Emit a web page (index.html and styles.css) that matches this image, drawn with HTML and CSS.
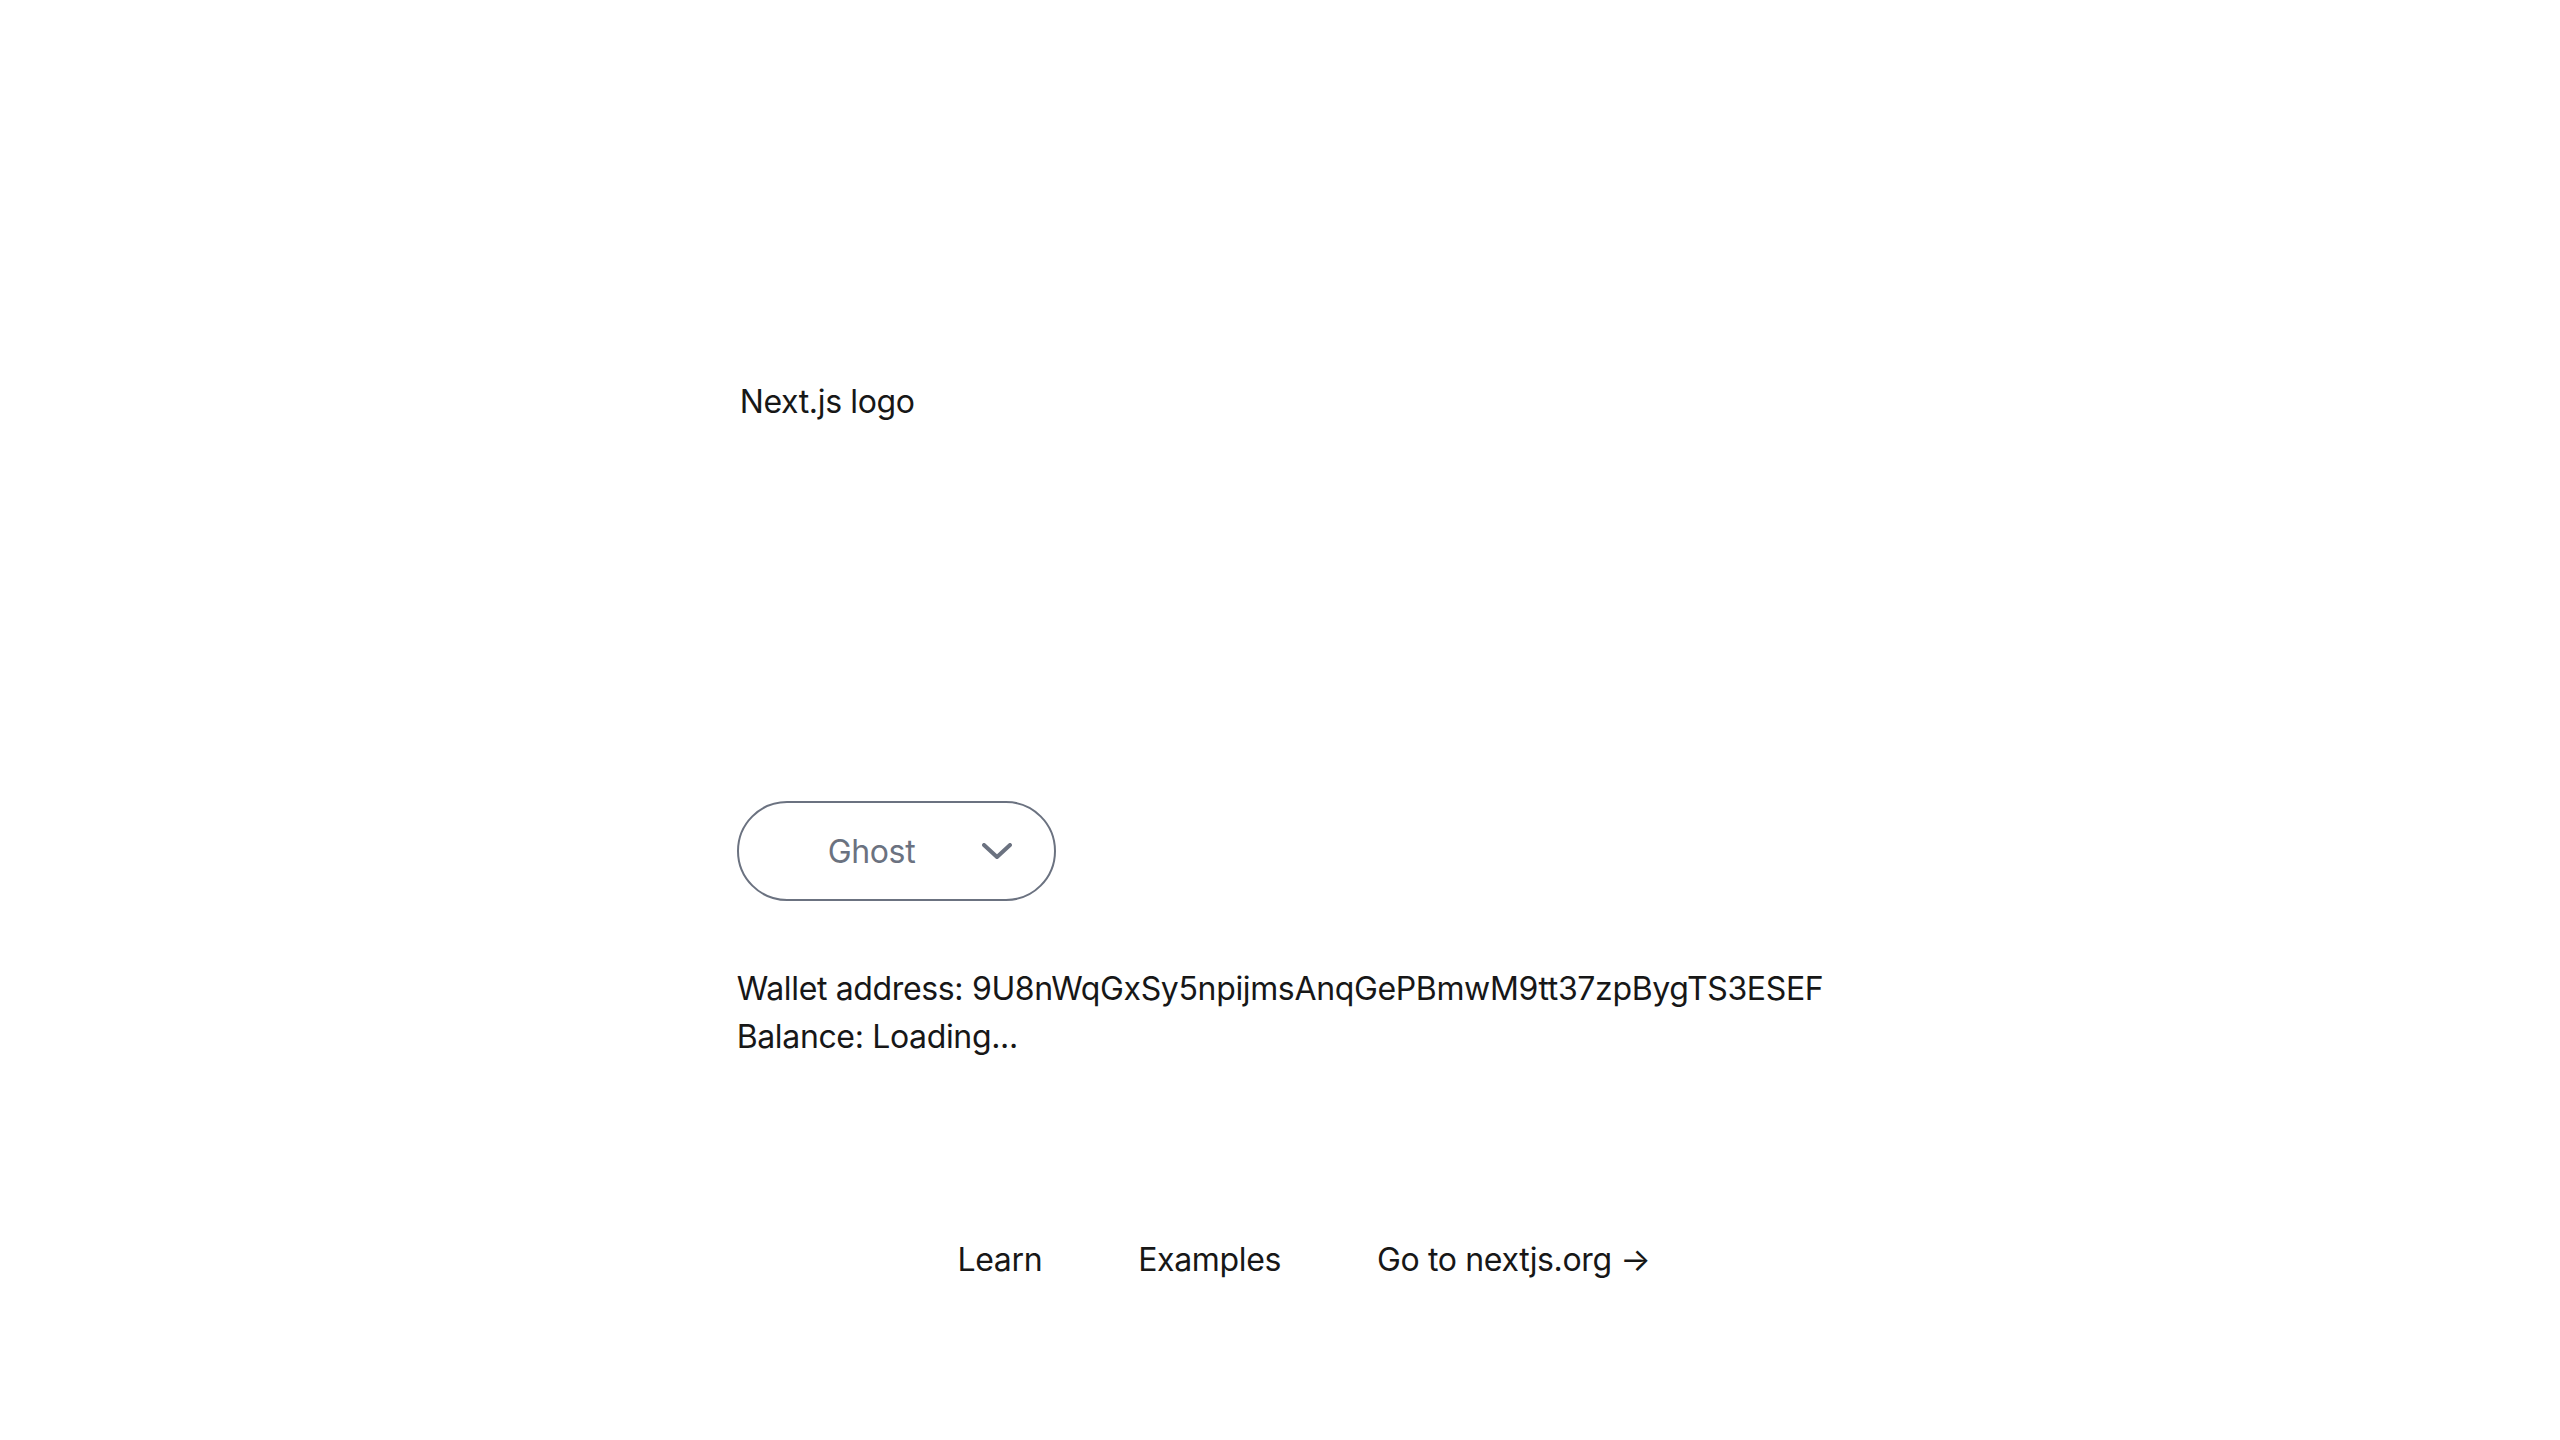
FILE: index.html
```html
<!DOCTYPE html>
<html lang="en">
<head>
<meta charset="utf-8">
<title>Create Next App</title>
<link rel="stylesheet" href="styles.css">
</head>
<body>
<div class="page">
  <main class="main">
    <div class="logo">Next.js logo</div>
    <div class="spacer"></div>
    <button class="wallet-btn" type="button">
      <span class="wallet-name">Ghost</span>
      <svg class="chevron" width="30" height="17" viewBox="0 0 30 17" aria-hidden="true"><path d="M2 2 L15 14 L28 2" fill="none" stroke="#6b7280" stroke-width="4" stroke-linecap="round" stroke-linejoin="round"/></svg>
    </button>
    <div class="info">
      <p>Wallet address: 9U8nWqGxSy5npijmsAnqGePBmwM9tt37zpBygTS3ESEF</p>
      <p>Balance: Loading...</p>
    </div>
  </main>
  <footer class="footer">
    <a class="flink" href="#"><span class="ficon"></span>Learn</a>
    <a class="flink" href="#"><span class="ficon"></span>Examples</a>
    <a class="flink" href="#"><span class="ficon"></span>Go to nextjs.org →</a>
  </footer>
</div>
</body>
</html>
```

FILE: styles.css
```css
html, body {
  margin: 0;
  padding: 0;
  background: #ffffff;
  color: #171717;
  font-family: Inter, "Liberation Sans", Arial, sans-serif;
  letter-spacing: -0.35px;
}

.page {
  display: grid;
  grid-template-rows: 40px 1fr 40px;
  align-items: center;
  justify-items: center;
  min-height: 1440px;
  box-sizing: border-box;
  padding: 160px;
  gap: 128px;
}

.main {
  grid-row-start: 2;
  display: flex;
  flex-direction: column;
  align-items: flex-start;
  gap: 64px;
}

.logo {
  width: 360px;
  height: 76px;
  padding-left: 3px;
  box-sizing: border-box;
  font-size: 32px;
  line-height: 46px;
  color: #171717;
}

.spacer {
  height: 218px;
}

.wallet-btn {
  width: 319px;
  height: 100px;
  box-sizing: border-box;
  border: 2px solid #6b7280;
  border-radius: 50px;
  background: #ffffff;
  display: flex;
  align-items: center;
  justify-content: space-between;
  padding: 0 42px 0 89px;
  font-family: Inter, "Liberation Sans", Arial, sans-serif;
  letter-spacing: -0.35px;
  font-size: 32px;
  color: #6b7280;
  cursor: pointer;
}

.chevron {
  display: block;
}

.info p {
  margin: 0;
  font-size: 32px;
  line-height: 48px;
}

.footer {
  grid-row-start: 3;
  display: flex;
  flex-wrap: wrap;
  align-items: center;
  justify-content: center;
  gap: 48px;
}

.flink {
  display: flex;
  align-items: center;
  gap: 16px;
  color: #171717;
  text-decoration: none;
  font-size: 32px;
  line-height: 48px;
}

.ficon {
  display: inline-block;
  width: 32px;
  height: 32px;
}
```
